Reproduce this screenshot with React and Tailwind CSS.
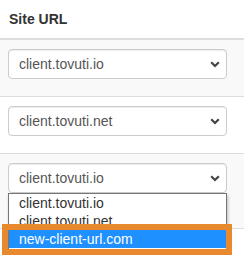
import { useState } from "react";

const rows = ["client.tovuti.io", "client.tovuti.net", "client.tovuti.io"];
const options = ["client.tovuti.io", "client.tovuti.net", "new-client-url.com"];

const Chevron = () => (
  <svg width="10" height="7" viewBox="0 0 10 7" className="text-[#444]">
    <path d="M1.2 1.3 L5 5 L8.8 1.3" fill="none" stroke="currentColor" strokeWidth="2.2" />
  </svg>
);

const SelectBox = ({ value }) => (
  <div className="flex h-[30px] w-[219px] items-center justify-between rounded-[4px] border border-[#ccc] bg-white pl-[10px] pr-[6px] text-[14px] text-[#555] shadow-[inset_0_1px_1px_rgba(0,0,0,0.075)]">
    <span>{value}</span>
    <Chevron />
  </div>
);

const App = () => {
  const [open] = useState(true);

  return (
    <div className="min-h-screen w-[244px] bg-white font-['Liberation_Sans',Arial,sans-serif] text-[#333]">
      {/* header */}
      <div className="flex h-[40px] items-center border-b-2 border-[#ddd] px-[9px] text-[14px] font-bold">
        Site URL
      </div>

      {rows.map((value, i) => (
        <div
          key={i}
          className={`relative border-b border-[#ddd] px-2 pt-[9px] ${
            i % 2 === 0 ? "bg-[#f9f9f9]" : "bg-white"
          } ${i === 2 ? "h-[75px]" : "h-[57px]"}`}
        >
          <SelectBox value={value} />

          {i === 2 && open && (
            <div className="absolute left-[8px] top-[39px] z-10 w-[219px] border border-[#767676] bg-white pb-[1px] text-[14px] shadow-[1px_2px_3px_rgba(0,0,0,0.25)]">
              {options.map((opt, j) => (
                <div
                  key={opt}
                  className={`flex h-[18px] items-center pl-[10px] ${
                    j === 2 ? "bg-[#1e90ff] text-white" : "text-[#333]"
                  }`}
                >
                  {opt}
                </div>
              ))}
              {/* highlight annotation */}
              <div className="absolute left-[-7px] top-[30px] h-[31px] w-[230px] border-[6px] border-[#e8892e]" />
            </div>
          )}
        </div>
      ))}
    </div>
  );
};

export default App;
